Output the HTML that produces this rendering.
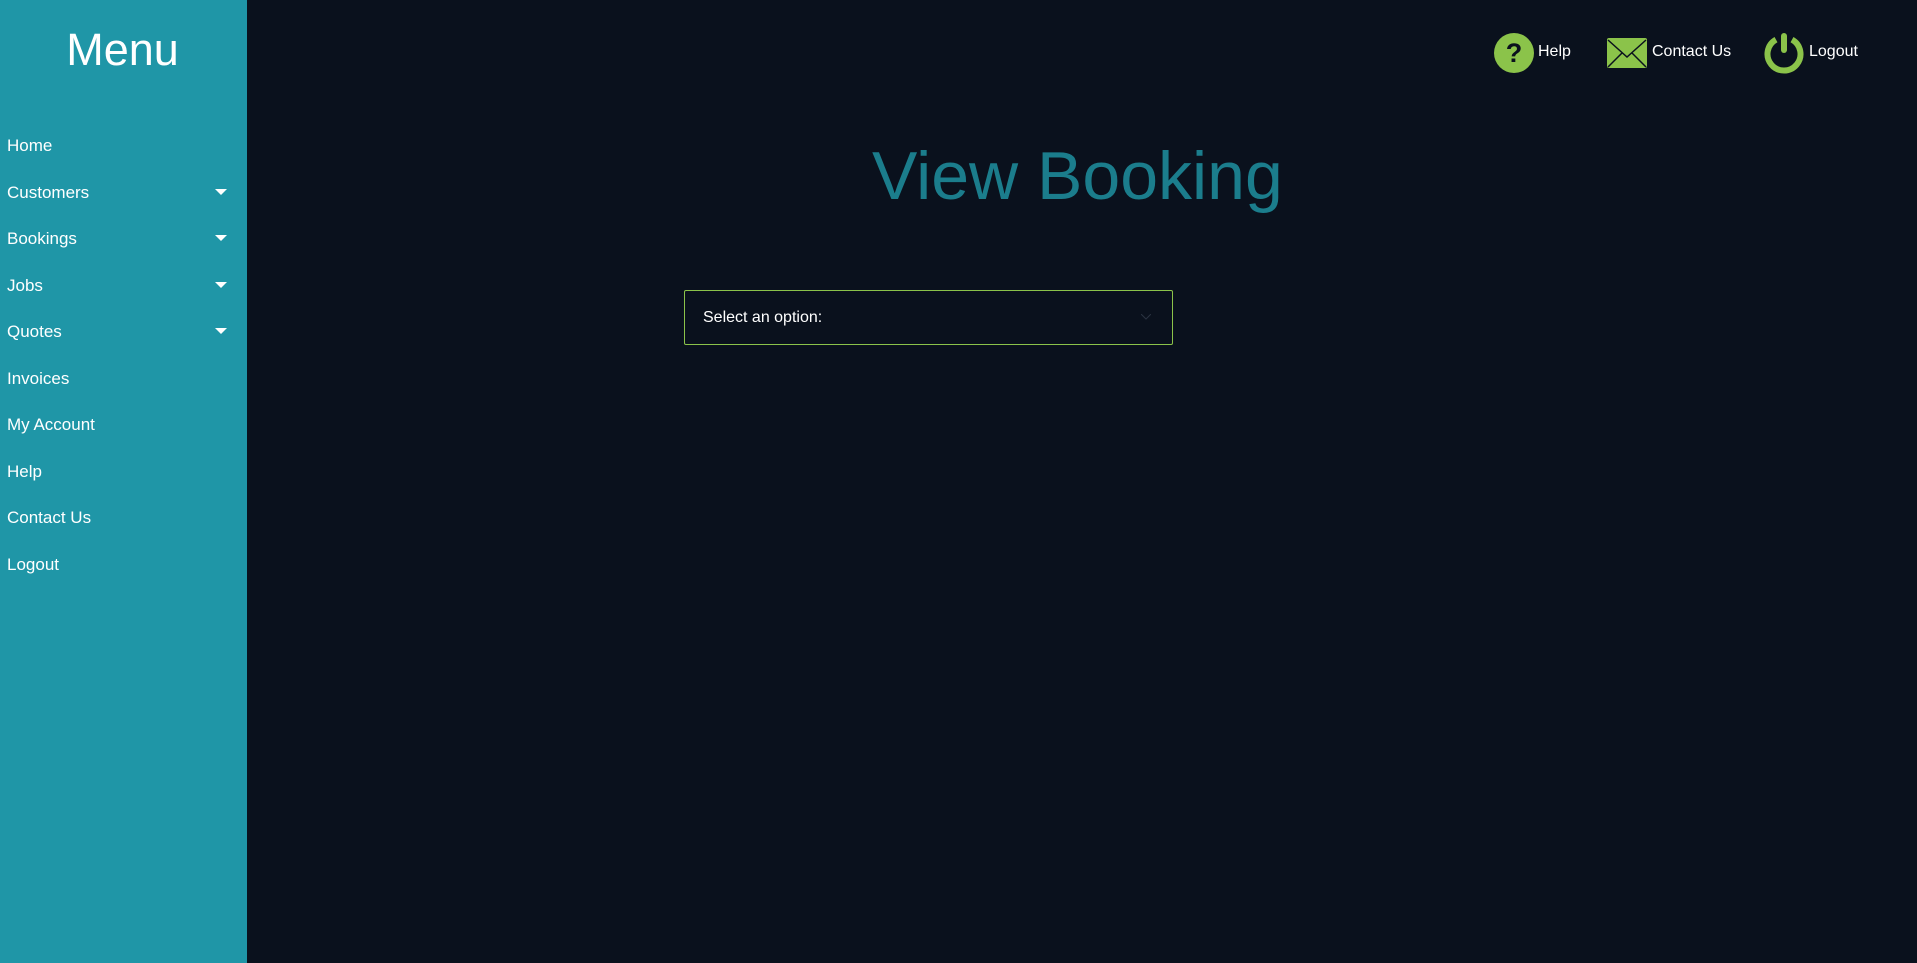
<!DOCTYPE html>
<html><head><meta charset="utf-8"><style>
html,body{margin:0;padding:0;width:1917px;height:963px;overflow:hidden;background:#0a111d;font-family:"Liberation Sans",sans-serif;}
.side{position:absolute;left:0;top:0;width:247px;height:963px;background:#1f96a7;}
.side h1{margin:0;position:absolute;top:24px;left:0;width:245px;text-align:center;color:#fff;font-weight:normal;font-size:45px;}
.side .it{position:absolute;left:7px;color:#fff;font-size:17px;}
.side .ar{position:absolute;left:215px;width:0;height:0;border-left:6px solid transparent;border-right:6px solid transparent;border-top:6px solid #fff;}
.title{position:absolute;left:872px;top:137px;color:#1b7d8c;font-size:68px;white-space:nowrap;}
.sel{position:absolute;left:684px;top:290px;width:489px;height:55px;border:1px solid #8bc34a;border-radius:2px;box-sizing:border-box;}
.sel span{position:absolute;left:18px;top:18px;color:#fff;font-size:16px;}
.hd{position:absolute;color:#fff;font-size:16px;top:43px;}
</style></head><body>
<div class="side">
<h1>Menu</h1>
<div class="it" style="top:136px">Home</div>
<div class="it" style="top:183px">Customers</div><div class="ar" style="top:189px"></div>
<div class="it" style="top:229px">Bookings</div><div class="ar" style="top:235px"></div>
<div class="it" style="top:276px">Jobs</div><div class="ar" style="top:282px"></div>
<div class="it" style="top:322px">Quotes</div><div class="ar" style="top:328px"></div>
<div class="it" style="top:369px">Invoices</div>
<div class="it" style="top:415px">My Account</div>
<div class="it" style="top:462px">Help</div>
<div class="it" style="top:508px">Contact Us</div>
<div class="it" style="top:555px">Logout</div>
</div>
<svg style="position:absolute;left:1494px;top:33px" width="40" height="40"><circle cx="20" cy="20" r="20" fill="#8bc34a"/><text x="20" y="29" text-anchor="middle" font-family="Liberation Sans" font-weight="bold" font-size="27" fill="#0a111d">?</text></svg>
<div class="hd" style="left:1538px">Help</div>
<svg style="position:absolute;left:1607px;top:38px" width="40" height="30"><rect x="0" y="0" width="40" height="30" rx="2" fill="#8bc34a"/><path d="M1 2 L20 19 L39 2 M1 29 L15 15 M39 29 L25 15" stroke="#0a111d" stroke-width="1.5" fill="none"/></svg>
<div class="hd" style="left:1652px">Contact Us</div>
<svg style="position:absolute;left:1764px;top:32px" width="42" height="44"><path d="M12 7.6 A16.5 16.5 0 1 0 28 7.6" stroke="#8bc34a" stroke-width="6" fill="none"/><rect x="17" y="1" width="6" height="20" rx="3" fill="#8bc34a"/></svg>
<div class="hd" style="left:1809px">Logout</div>
<div class="title">View Booking</div>
<div class="sel"><span>Select an option:</span><svg style="position:absolute;left:456px;top:23px" width="10" height="6"><path d="M0 0 L5 5 L10 0" stroke="#2a3340" fill="none"/></svg></div>
</body></html>
